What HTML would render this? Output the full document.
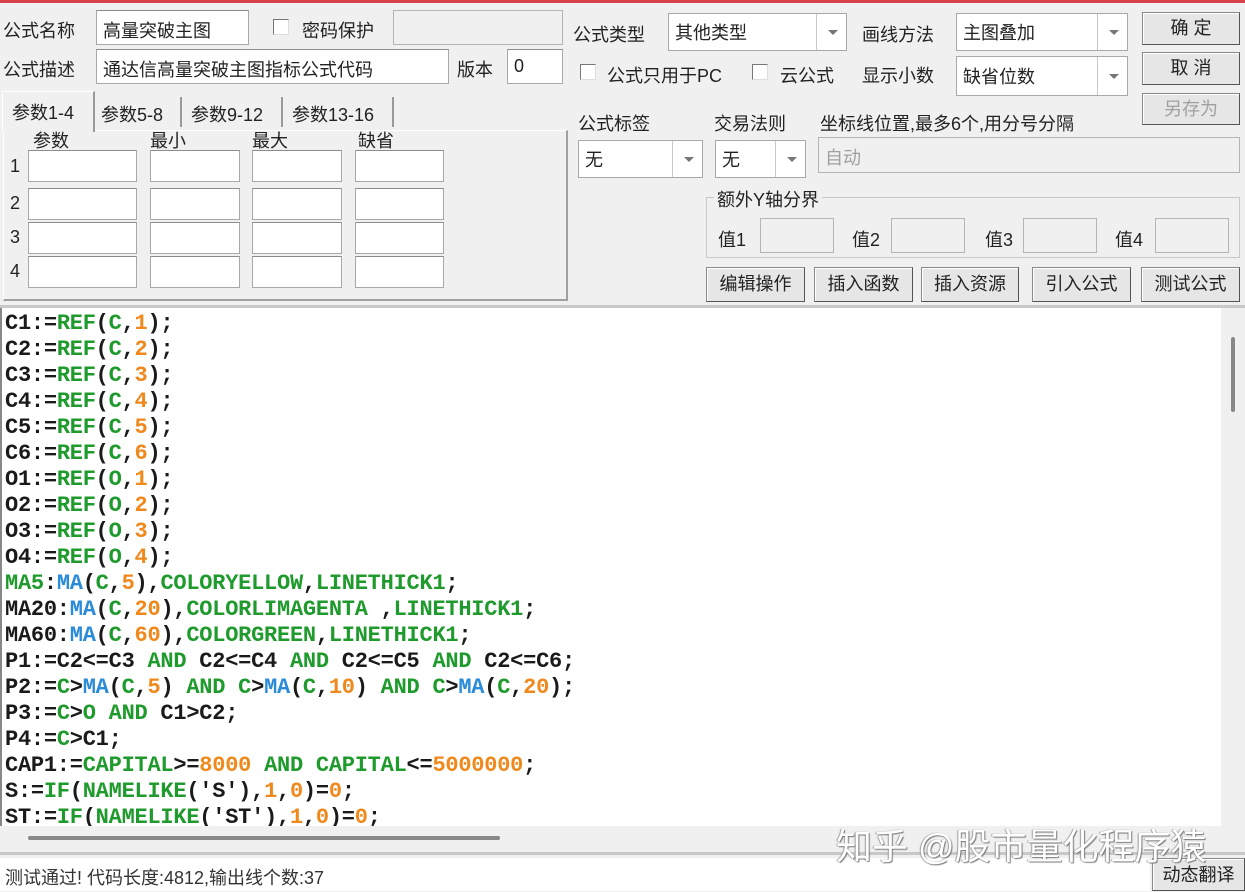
<!DOCTYPE html>
<html><head><meta charset="utf-8"><style>
*{margin:0;padding:0;box-sizing:border-box}
body{width:1245px;height:891px;background:#f0f0f0;position:relative;overflow:hidden;font-family:"Liberation Sans","Noto Sans CJK SC",sans-serif;font-size:18px;color:#222}
.a{position:absolute;white-space:nowrap}
.in{position:absolute;background:#fff;border:1px solid #a8a8a8;border-top-color:#8c8c8c}
.dis{position:absolute;background:#f0f0f0;border:1px solid #b4b4b4}
.cb{position:absolute;width:16px;height:16px;background:#fff;border:1px solid #777;border-right-color:#ddd;border-bottom-color:#ddd}
.combo{position:absolute;background:#fff;border:1px solid #a8a8a8}
.combo .ar{position:absolute;right:0;top:0;bottom:0;width:30px;border-left:1px solid #c8c8c8}
.combo .ar:after{content:"";position:absolute;left:11px;top:50%;margin-top:-2px;border-left:5px solid transparent;border-right:5px solid transparent;border-top:5px solid #777}
.combo span{position:absolute;left:6px;top:50%;transform:translateY(-50%)}
.btn{position:absolute;background:#e6e6e6;border:1px solid #8a8a8a;border-right-color:#555;border-bottom-color:#555;box-shadow:inset 1px 1px 0 #fff;text-align:center;font-size:18px}
.code{position:absolute;left:0;top:308px;width:1221px;height:518px;background:#fff;border-left:2px solid #888;overflow:hidden;font-family:"Liberation Mono",monospace;font-weight:bold;font-size:22px;letter-spacing:-0.25px;line-height:26px;color:#1a1a1a;padding:3px 0 0 3px}
.g{color:#1f9a2c}.o{color:#f0881c}.b{color:#2a8bd8}
</style></head><body>
<div class="a" style="left:0;top:0;width:1245px;height:3px;background:#d8434b"></div>

<div class="a" style="left:3px;top:17px">公式名称</div>
<div class="in" style="left:96px;top:10px;width:153px;height:35px"><span class="a" style="left:6px;top:6px">高量突破主图</span></div>
<div class="cb" style="left:273px;top:19px"></div>
<div class="a" style="left:302px;top:17px">密码保护</div>
<div class="dis" style="left:393px;top:10px;width:170px;height:35px"></div>
<div class="a" style="left:3px;top:56px">公式描述</div>
<div class="in" style="left:96px;top:49px;width:353px;height:35px"><span class="a" style="left:6px;top:6px">通达信高量突破主图指标公式代码</span></div>
<div class="a" style="left:457px;top:56px">版本</div>
<div class="in" style="left:507px;top:49px;width:56px;height:35px"><span class="a" style="left:6px;top:6px">0</span></div>

<div class="a" style="left:3px;top:130px;width:565px;height:171px;border:1px solid #fff;border-right:2px solid #a0a0a0;border-bottom:2px solid #a0a0a0"></div>
<div class="a" style="left:2px;top:91px;width:93px;height:41px;background:#f0f0f0;border-left:1px solid #fff;border-top:1px solid #fff;border-right:2px solid #999"></div>
<div class="a" style="left:12px;top:99px">参数1-4</div>
<div class="a" style="left:101px;top:101px">参数5-8</div>
<div class="a" style="left:180px;top:97px;height:30px;border-left:2px solid #999"></div>
<div class="a" style="left:191px;top:101px">参数9-12</div>
<div class="a" style="left:281px;top:97px;height:30px;border-left:2px solid #999"></div>
<div class="a" style="left:292px;top:101px">参数13-16</div>
<div class="a" style="left:392px;top:97px;height:30px;border-left:2px solid #999"></div>
<div class="a" style="left:33px;top:127px">参数</div>
<div class="a" style="left:150px;top:127px">最小</div>
<div class="a" style="left:252px;top:127px">最大</div>
<div class="a" style="left:358px;top:127px">缺省</div>
<div class="a" style="left:10px;top:156px">1</div>
<div class="a" style="left:10px;top:193px">2</div>
<div class="a" style="left:10px;top:227px">3</div>
<div class="a" style="left:10px;top:261px">4</div>
<div class="in" style="left:28px;top:150px;width:109px;height:32px"></div><div class="in" style="left:150px;top:150px;width:90px;height:32px"></div><div class="in" style="left:252px;top:150px;width:90px;height:32px"></div><div class="in" style="left:355px;top:150px;width:89px;height:32px"></div>
<div class="in" style="left:28px;top:188px;width:109px;height:32px"></div><div class="in" style="left:150px;top:188px;width:90px;height:32px"></div><div class="in" style="left:252px;top:188px;width:90px;height:32px"></div><div class="in" style="left:355px;top:188px;width:89px;height:32px"></div>
<div class="in" style="left:28px;top:222px;width:109px;height:32px"></div><div class="in" style="left:150px;top:222px;width:90px;height:32px"></div><div class="in" style="left:252px;top:222px;width:90px;height:32px"></div><div class="in" style="left:355px;top:222px;width:89px;height:32px"></div>
<div class="in" style="left:28px;top:256px;width:109px;height:32px"></div><div class="in" style="left:150px;top:256px;width:90px;height:32px"></div><div class="in" style="left:252px;top:256px;width:90px;height:32px"></div><div class="in" style="left:355px;top:256px;width:89px;height:32px"></div>

<div class="a" style="left:573px;top:21px">公式类型</div>
<div class="combo" style="left:668px;top:13px;width:179px;height:38px"><span>其他类型</span><div class="ar"></div></div>
<div class="a" style="left:862px;top:21px">画线方法</div>
<div class="combo" style="left:956px;top:13px;width:172px;height:38px"><span>主图叠加</span><div class="ar"></div></div>
<div class="btn" style="left:1142px;top:12px;width:98px;height:33px;line-height:31px">确 定</div>
<div class="btn" style="left:1142px;top:52px;width:98px;height:33px;line-height:31px">取 消</div>
<div class="btn" style="left:1142px;top:93px;width:98px;height:32px;line-height:30px;color:#a0a0a0">另存为</div>
<div class="cb" style="left:580px;top:64px"></div>
<div class="a" style="left:607px;top:62px">公式只用于PC</div>
<div class="cb" style="left:752px;top:64px"></div>
<div class="a" style="left:780px;top:62px">云公式</div>
<div class="a" style="left:862px;top:62px">显示小数</div>
<div class="combo" style="left:956px;top:56px;width:172px;height:40px"><span>缺省位数</span><div class="ar"></div></div>
<div class="a" style="left:578px;top:110px">公式标签</div>
<div class="a" style="left:714px;top:110px">交易法则</div>
<div class="a" style="left:820px;top:110px">坐标线位置,最多6个,用分号分隔</div>
<div class="combo" style="left:578px;top:140px;width:125px;height:38px"><span>无</span><div class="ar"></div></div>
<div class="combo" style="left:715px;top:140px;width:91px;height:38px"><span>无</span><div class="ar"></div></div>
<div class="dis" style="left:818px;top:137px;width:422px;height:36px"><span class="a" style="left:6px;top:6px;color:#a0a0a0">自动</span></div>
<div class="a" style="left:706px;top:197px;width:534px;height:61px;border:1px solid #c8c8c8"></div>
<div class="a" style="left:714px;top:186px;background:#f0f0f0;padding:0 3px">额外Y轴分界</div>
<div class="a" style="left:718px;top:226px">值1</div><div class="dis" style="left:760px;top:218px;width:74px;height:35px"></div>
<div class="a" style="left:852px;top:226px">值2</div><div class="dis" style="left:891px;top:218px;width:74px;height:35px"></div>
<div class="a" style="left:985px;top:226px">值3</div><div class="dis" style="left:1023px;top:218px;width:74px;height:35px"></div>
<div class="a" style="left:1115px;top:226px">值4</div><div class="dis" style="left:1155px;top:218px;width:74px;height:35px"></div>
<div class="btn" style="left:706px;top:267px;width:99px;height:35px;line-height:33px">编辑操作</div>
<div class="btn" style="left:814px;top:267px;width:99px;height:35px;line-height:33px">插入函数</div>
<div class="btn" style="left:921px;top:267px;width:98px;height:35px;line-height:33px">插入资源</div>
<div class="btn" style="left:1032px;top:267px;width:99px;height:35px;line-height:33px">引入公式</div>
<div class="btn" style="left:1141px;top:267px;width:99px;height:35px;line-height:33px">测试公式</div>
<div class="a" style="left:0;top:305px;width:1245px;height:3px;background:#c8c8c8"></div>

<div class="code">C1:=<span class="g">REF</span>(<span class="g">C</span>,<span class="o">1</span>);<br>C2:=<span class="g">REF</span>(<span class="g">C</span>,<span class="o">2</span>);<br>C3:=<span class="g">REF</span>(<span class="g">C</span>,<span class="o">3</span>);<br>C4:=<span class="g">REF</span>(<span class="g">C</span>,<span class="o">4</span>);<br>C5:=<span class="g">REF</span>(<span class="g">C</span>,<span class="o">5</span>);<br>C6:=<span class="g">REF</span>(<span class="g">C</span>,<span class="o">6</span>);<br>O1:=<span class="g">REF</span>(<span class="g">O</span>,<span class="o">1</span>);<br>O2:=<span class="g">REF</span>(<span class="g">O</span>,<span class="o">2</span>);<br>O3:=<span class="g">REF</span>(<span class="g">O</span>,<span class="o">3</span>);<br>O4:=<span class="g">REF</span>(<span class="g">O</span>,<span class="o">4</span>);<br><span class="g">MA5</span>:<span class="b">MA</span>(<span class="g">C</span>,<span class="o">5</span>),<span class="g">COLORYELLOW</span>,<span class="g">LINETHICK1</span>;<br>MA20:<span class="b">MA</span>(<span class="g">C</span>,<span class="o">20</span>),<span class="g">COLORLIMAGENTA</span> ,<span class="g">LINETHICK1</span>;<br>MA60:<span class="b">MA</span>(<span class="g">C</span>,<span class="o">60</span>),<span class="g">COLORGREEN</span>,<span class="g">LINETHICK1</span>;<br>P1:=C2&lt;=C3 <span class="g">AND</span> C2&lt;=C4 <span class="g">AND</span> C2&lt;=C5 <span class="g">AND</span> C2&lt;=C6;<br>P2:=<span class="g">C</span>&gt;<span class="b">MA</span>(<span class="g">C</span>,<span class="o">5</span>) <span class="g">AND</span> <span class="g">C</span>&gt;<span class="b">MA</span>(<span class="g">C</span>,<span class="o">10</span>) <span class="g">AND</span> <span class="g">C</span>&gt;<span class="b">MA</span>(<span class="g">C</span>,<span class="o">20</span>);<br>P3:=<span class="g">C</span>&gt;<span class="g">O</span> <span class="g">AND</span> C1&gt;C2;<br>P4:=<span class="g">C</span>&gt;C1;<br>CAP1:=<span class="g">CAPITAL</span>&gt;=<span class="o">8000</span> <span class="g">AND</span> <span class="g">CAPITAL</span>&lt;=<span class="o">5000000</span>;<br>S:=<span class="g">IF</span>(<span class="g">NAMELIKE</span>('S'),<span class="o">1</span>,<span class="o">0</span>)=<span class="o">0</span>;<br>ST:=<span class="g">IF</span>(<span class="g">NAMELIKE</span>('ST'),<span class="o">1</span>,<span class="o">0</span>)=<span class="o">0</span>;</div>
<div class="a" style="left:1221px;top:308px;width:24px;height:518px;background:#f0f0f0"></div>
<div class="a" style="left:1231px;top:337px;width:4px;height:75px;background:#888;border-radius:2px"></div>
<div class="a" style="left:2px;top:826px;width:1219px;height:26px;background:#f0f0f0"></div>
<div class="a" style="left:28px;top:836px;width:472px;height:4px;background:#888;border-radius:2px"></div>
<div class="a" style="left:0;top:852px;width:1245px;height:3px;background:#c8c8c8"></div>
<div class="a" style="left:0;top:858px;width:1150px;height:33px;background:#fff"></div>
<div class="a" style="left:5px;top:864px;font-size:18px;color:#333">测试通过! 代码长度:4812,输出线个数:37</div>
<div class="btn" style="left:1152px;top:858px;width:93px;height:33px;line-height:33px">动态翻译</div>
<div class="a" style="left:836px;top:818px;font-size:36px;color:#fff;text-shadow:1px 1px 1px #777,-1px 0 1px #999">知乎 @股市量化程序猿</div>
</body></html>
